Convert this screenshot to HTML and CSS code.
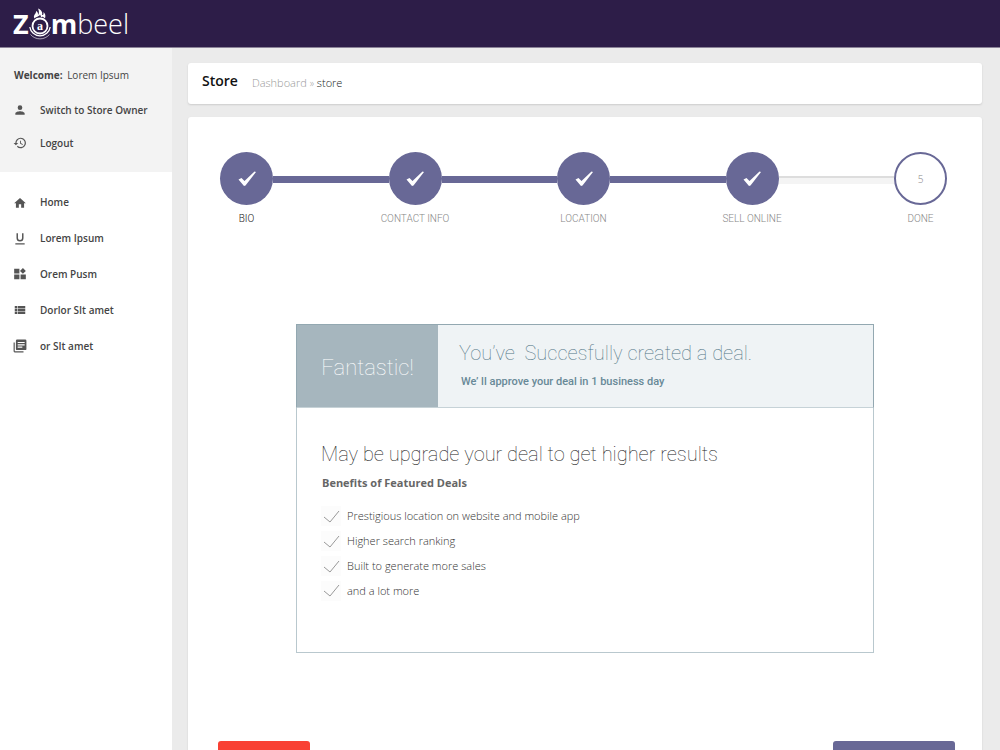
FILE: index.html
```html
<!DOCTYPE html>
<html lang="en">
<head>
<meta charset="utf-8">
<title>Zombeel - Store</title>
<link rel="stylesheet" href="styles.css">
</head>
<body>
<div class="app">
  <header class="topbar">
    <a class="logo" href="#" aria-label="Zombeel">
      <span class="logo-bold">Z</span>
      <svg class="logo-mark" width="24" height="34" viewBox="0 0 24 34" fill="none" stroke="#fff">
        <circle cx="12" cy="19" r="7.500" stroke-width="1.800"/>
        <path d="M1.800 20a10.300 10.300 0 0 0 20.400 0" stroke-width="1.300"/>
        <path d="M2.500 27.500a12.500 12.500 0 0 0 19 0" stroke-width="1" opacity=".6"/>
        <path d="M6.500 11.500C4.500 8 8.500 7 8 4c2.500 1.500 2 3 2 4C11.500 6 11 4 10 1.500c3.500 1.500 5 4 4 6.500C16 8 15.500 6.500 15.500 5c2.500 2.500 2 4.500 1.500 6.500-2-2-3-2-4-1 0-1.500-.5-2-1-3-.5 2-3.500 2-5.500 4z" fill="#fff" stroke="none"/>
        <text class="logo-a" x="12" y="23" text-anchor="middle">a</text>
      </svg>
      <span class="logo-bold">m</span><span class="logo-light">beel</span>
    </a>
  </header>
  <div class="layout">
    <aside class="sidebar">
      <div class="account">
        <p class="welcome"><strong>Welcome:</strong> Lorem Ipsum</p>
        <a class="nav-link" href="#">
          <svg class="icon" viewBox="0 0 24 24"><path d="M12 12a4 4 0 1 0 0-8 4 4 0 0 0 0 8zm0 2c-2.700 0-8 1.300-8 4v2h16v-2c0-2.700-5.300-4-8-4z"/></svg>Switch to Store Owner</a>
        <a class="nav-link" href="#">
          <svg class="icon" viewBox="0 0 24 24"><path d="M13 3a9 9 0 0 0-9 9H1l3.900 3.900.1.100L9 12H6a7 7 0 1 1 2.100 4.900l-1.400 1.400A9 9 0 1 0 13 3zm-1 5v5l4.300 2.500.7-1.200-3.500-2.100V8H12z"/></svg>Logout</a>
      </div>
      <nav class="menu">
        <a class="nav-link" href="#">
          <svg class="icon" viewBox="0 0 24 24"><path d="M10 22v-6h4v6h5v-8h3L12 5 2 14h3v8z"/></svg>Home</a>
        <a class="nav-link" href="#">
          <svg class="icon" viewBox="0 0 24 24"><path d="M12 18a6 6 0 0 0 6-6V4h-2.500v8a3.500 3.500 0 0 1-7 0V4H6v8a6 6 0 0 0 6 6zm-8 3v2h16v-2H4z"/></svg>Lorem Ipsum</a>
        <a class="nav-link" href="#">
          <svg class="icon" viewBox="0 0 24 24"><path d="M13 13v8h9v-8h-9zM2 21h9v-8H2v8zM2 3v8h9V3H2zm15-1.500L12 6.700l5 5 5-5z"/></svg>Orem Pusm</a>
        <a class="nav-link" href="#">
          <svg class="icon" viewBox="0 0 24 24"><path d="M3 14h4v-4H3v4zm0 5h4v-4H3v4zM3 9h4V5H3v4zm5 5h13v-4H8v4zm0 5h13v-4H8v4zM8 5v4h13V5H8z"/></svg>Dorlor SIt amet</a>
        <a class="nav-link" href="#">
          <svg class="icon" viewBox="0 0 24 24"><path d="M3 6H1v15a2 2 0 0 0 2 2h15v-2H3zM21 1H7a2 2 0 0 0-2 2v14a2 2 0 0 0 2 2h14a2 2 0 0 0 2-2V3a2 2 0 0 0-2-2zm-1 10H8V9h12v2zm-4 4H8v-2h8v2zm4-8H8V5h12v2z" fill-rule="evenodd"/></svg>or SIt amet</a>
      </nav>
    </aside>
    <main class="content">
      <div class="card page-head">
        <h1 class="page-title">Store</h1>
        <div class="crumbs"><a href="#">Dashboard</a> <span class="crumb-sep">»</span> <span class="crumb-current">store</span></div>
      </div>
      <section class="card panel">
        <ol class="steps">
          <li class="step step-done step-first"><div class="step-row"><span class="dot"><svg class="tick" viewBox="0 0 18 16"><path d="M.5 8.500 3.500 7 6.500 10 16.500.5 18 1 7.500 14.500 6 15z"/></svg></span></div><span class="step-label">BIO</span></li>
          <li class="step step-done"><div class="step-row"><span class="dot"><svg class="tick" viewBox="0 0 18 16"><path d="M.5 8.500 3.500 7 6.500 10 16.500.5 18 1 7.500 14.500 6 15z"/></svg></span></div><span class="step-label">CONTACT INFO</span></li>
          <li class="step step-done"><div class="step-row"><span class="dot"><svg class="tick" viewBox="0 0 18 16"><path d="M.5 8.500 3.500 7 6.500 10 16.500.5 18 1 7.500 14.500 6 15z"/></svg></span></div><span class="step-label">LOCATION</span></li>
          <li class="step step-latest"><div class="step-row"><span class="dot"><svg class="tick" viewBox="0 0 18 16"><path d="M.5 8.500 3.500 7 6.500 10 16.500.5 18 1 7.500 14.500 6 15z"/></svg></span></div><span class="step-label">SELL ONLINE</span></li>
          <li class="step step-open"><div class="step-row"><span class="dot">5</span></div><span class="step-label">DONE</span></li>
        </ol>
        <div class="notice">
          <div class="banner">
            <div class="banner-tag">Fantastic!</div>
            <div class="banner-text">
              <h2 class="headline banner-title">You’ve&nbsp; Succesfully created a deal.</h2>
              <p class="banner-sub">We’ ll approve your deal in 1 business day</p>
            </div>
          </div>
          <div class="notice-body">
            <h2 class="headline">May be upgrade your deal to get higher results</h2>
            <h3 class="subhead">Benefits of Featured Deals</h3>
            <ul class="benefits">
              <li><svg class="check" viewBox="0 0 20 20"><path d="M3 11l6 5L18 5"/></svg>Prestigious location on website and mobile app</li>
              <li><svg class="check" viewBox="0 0 20 20"><path d="M3 11l6 5L18 5"/></svg>Higher search ranking</li>
              <li><svg class="check" viewBox="0 0 20 20"><path d="M3 11l6 5L18 5"/></svg>Built to generate more sales</li>
              <li><svg class="check" viewBox="0 0 20 20"><path d="M3 10l6 5L18 4"/></svg>and a lot more</li>
            </ul>
          </div>
        </div>
        <div class="actions">
          <button class="btn btn-back" type="button" aria-label="Back"></button>
          <button class="btn btn-next" type="button" aria-label="Finish"></button>
        </div>
      </section>
    </main>
  </div>
</div>
</body>
</html>
```
FILE: styles.css
```css
* { box-sizing: border-box; }
body, h1, h2, h3, p, ol, ul { margin: 0; padding: 0; }
ol, ul { list-style: none; }
a { color: inherit; text-decoration: none; }
body { font-family: "Open Sans", sans-serif; font-size: 11px; color: #444; background: #ebebeb; }

.app { display: flex; flex-direction: column; height: 100vh; overflow: hidden; }
.topbar { flex: none; display: flex; height: 48px; padding: 0 13px; background: #2d1d48; border-bottom: 1px solid #8b8398; }
.logo { display: flex; align-items: center; color: #fff; font-size: 27px; line-height: 46px; }
.logo-bold { font-weight: 700; }
.logo-light { font-weight: 300; }
.logo-mark { margin: 0 -1px; }
.logo-a { font: 700 12px "Liberation Serif", serif; fill: #fff; stroke: none; }

.layout { flex: 1; display: flex; min-height: 0; }
.sidebar { flex: none; width: 172px; background: #fff; font-size: 10px; }
.account { height: 124px; padding: 16px 12px; background: #f3f3f3; }
.welcome { padding: 0 2px; line-height: 22px; margin-bottom: 7px; }
.welcome strong { font-weight: 700; margin-right: 2px; }
.nav-link { display: flex; align-items: center; gap: 12px; font-weight: 600; white-space: nowrap; }
.account .nav-link { height: 33px; }
.menu { padding: 12px; }
.menu .nav-link { height: 36px; }
.icon { flex: none; width: 16px; height: 14px; fill: #555; }

.content { flex: 1; min-width: 0; padding: 15px 18px 0 16px; }
.card { background: #fff; border-radius: 3px; box-shadow: 0 1px 2px #ccc; }
.page-head { display: flex; align-items: center; gap: 14px; height: 41px; padding: 0 14px; margin-bottom: 13px; }
.page-title { font-size: 14px; font-weight: 600; line-height: 38px; color: #111; padding-bottom: 5px; }
.crumbs { font-weight: 300; color: #999; padding-bottom: 3px; }
.crumb-sep { font-size: 10px; }
.crumb-current { color: #222; }

.panel { padding: 35px 32px 40px; }
.steps { display: flex; margin-right: 3px; }
.step { flex: 1; }
.step-open { flex: none; }
.step-row { display: flex; align-items: center; }
.step-done .step-row::after { content: ""; flex: 1; height: 7px; margin-top: 2px; background: #686896; }
.step-latest .step-row::after { content: ""; flex: 1; height: 6px; margin-top: 2px; background: #f4f4f4; border-top: 2px solid #ddd; }
.dot { flex: none; display: flex; align-items: center; justify-content: center; width: 53px; height: 53px; border-radius: 50%; background: #686896; }
.step-open .dot { background: #fff; border: 2px solid #686896; font: 300 10px "Open Sans", sans-serif; color: #888; }
.tick { width: 18px; height: 16px; fill: #fff; }
.step-label { display: flex; justify-content: center; width: 53px; margin-top: 7px; font: 300 10px/14px Roboto, sans-serif; color: #888; white-space: nowrap; }
.step-first .step-label { color: #222; }

.notice { max-width: 578px; margin: 98px auto 88px; border: 1px solid #b9c8ce; }
.banner { display: flex; height: 84px; margin: -1px -1px 0; border: 1px solid #93a8b1; border-bottom-color: #c6d2d7; background: #eff3f5; }
.banner-tag { display: flex; align-items: center; justify-content: center; width: 141px; padding-top: 2px; background: #a6b6be; color: #fff; font: 100 22px Roboto, sans-serif; }
.banner-text { padding: 15px 21px; color: #527686; }
.headline { font: 100 20px/26px Roboto, sans-serif; color: #222; }
.banner-title { color: #527686; }
.banner-sub { padding: 7px 2px; font: 500 11px/18px Roboto, sans-serif; color: #688997; }
.notice-body { padding: 33px 24px 49px; }
.subhead { padding: 0 1px; margin: 7px 0 11px; font-size: 11px; line-height: 18px; font-weight: 700; color: #666; }
.benefits li { display: flex; align-items: center; gap: 6px; height: 25px; font-weight: 300; color: #333; }
.check { width: 20px; height: 20px; background: #fcfcfc; fill: none; stroke: #999; stroke-width: 1; }

.actions { display: flex; justify-content: space-between; margin: 0 -5px 0 -2px; }
.btn { height: 36px; border: 0; border-radius: 3px; }
.btn-back { width: 92px; background: #f94134; }
.btn-next { width: 122px; background: #686896; }
```
